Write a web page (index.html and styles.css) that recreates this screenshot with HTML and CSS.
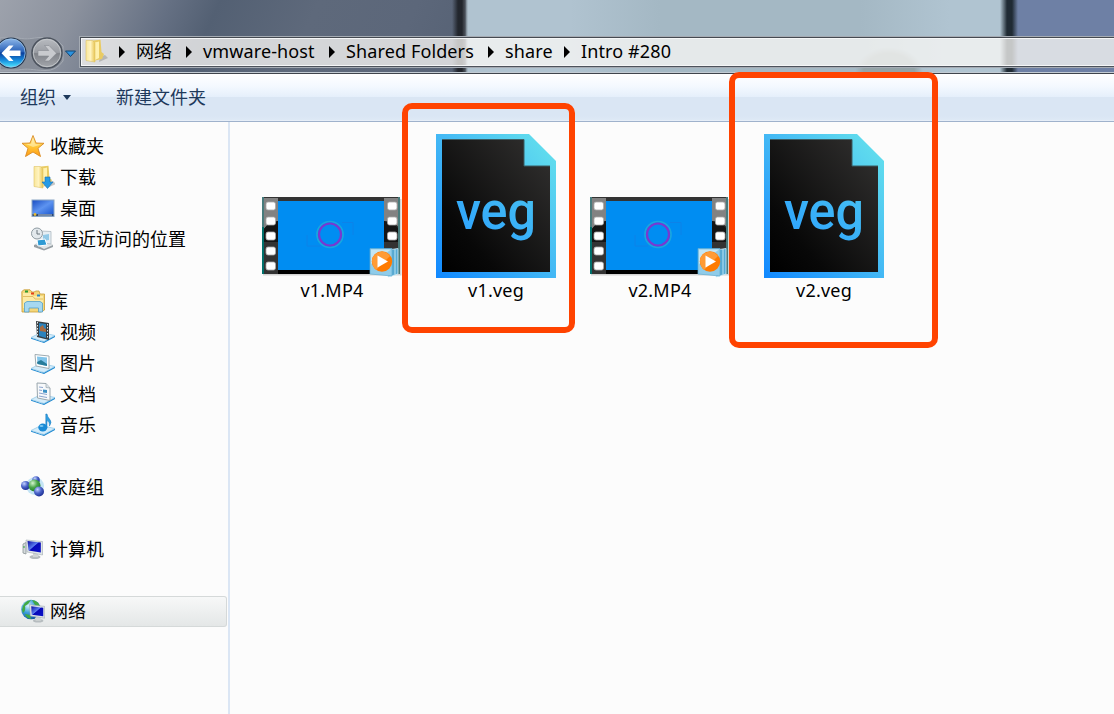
FILE: index.html
```html
<!DOCTYPE html>
<html lang="zh-CN">
<head>
<meta charset="utf-8">
<title>Intro #280</title>
<link rel="stylesheet" href="styles.css">
</head>
<body>
<svg class="defs" width="0" height="0" aria-hidden="true">
  <defs>
    <linearGradient id="vegFrame" x1="0" y1="1" x2="1" y2="0"><stop offset="0" stop-color="#1088ff"/><stop offset=".5" stop-color="#43b8f5"/><stop offset="1" stop-color="#66e4ec"/></linearGradient>
    <linearGradient id="vegInk" x1="0" y1="1" x2="1" y2="0"><stop offset="0" stop-color="#2ba0ff"/><stop offset="1" stop-color="#4ac4f0"/></linearGradient>
    <linearGradient id="vegBody" x1="0" y1="1" x2="1" y2="0"><stop offset="0" stop-color="#000"/><stop offset=".25" stop-color="#080808"/><stop offset="1" stop-color="#333231"/></linearGradient>
    <linearGradient id="blueBtn" x1="0" y1="0" x2="0" y2="1"><stop offset="0" stop-color="#8ab4e8"/><stop offset=".45" stop-color="#2a62b8"/><stop offset=".5" stop-color="#0b3f9c"/><stop offset=".75" stop-color="#168adc"/><stop offset="1" stop-color="#4fe6ff"/></linearGradient>
    <linearGradient id="greyBtn" x1="0" y1="0" x2="0" y2="1"><stop offset="0" stop-color="#b9bcc1"/><stop offset=".48" stop-color="#9a9da3"/><stop offset=".52" stop-color="#808389"/><stop offset="1" stop-color="#a5a8ad"/></linearGradient>
    <linearGradient id="yellow" x1="0" y1="0" x2="1" y2="0"><stop offset="0" stop-color="#f9e79b"/><stop offset=".5" stop-color="#fff3bf"/><stop offset="1" stop-color="#e8c552"/></linearGradient>
    <linearGradient id="star" x1="0" y1="0" x2="0" y2="1"><stop offset="0" stop-color="#ffe9a0"/><stop offset=".5" stop-color="#ffc93a"/><stop offset="1" stop-color="#ff9a14"/></linearGradient>
    <linearGradient id="screen" x1="0" y1="0" x2="1" y2="1"><stop offset="0" stop-color="#1c4fc4"/><stop offset=".5" stop-color="#5d93f0"/><stop offset="1" stop-color="#1e5ad0"/></linearGradient>
    <linearGradient id="monitor" x1="0" y1="0" x2="1" y2="1"><stop offset="0" stop-color="#0a0aa0"/><stop offset=".45" stop-color="#5a7cf0"/><stop offset=".5" stop-color="#0808b8"/><stop offset="1" stop-color="#0a12c8"/></linearGradient>
    <radialGradient id="ballBlue" cx=".35" cy=".3" r=".75"><stop offset="0" stop-color="#c3d2ff"/><stop offset=".5" stop-color="#4a63c8"/><stop offset="1" stop-color="#1b2c90"/></radialGradient>
    <radialGradient id="ballGreen" cx=".35" cy=".3" r=".75"><stop offset="0" stop-color="#d5f5cf"/><stop offset=".5" stop-color="#4aa64a"/><stop offset="1" stop-color="#187a22"/></radialGradient>
    <radialGradient id="globe" cx=".35" cy=".3" r=".8"><stop offset="0" stop-color="#d7f2ff"/><stop offset=".45" stop-color="#3e9fdc"/><stop offset="1" stop-color="#0b4a94"/></radialGradient>

    <symbol id="tray" viewBox="0 0 24 24">
      <path d="M0 17.500 11 21.500 24 15.500V17L13 23 0 18.700z" fill="#1c87d0"/>
      <path d="M0 17.500 10 12.500 24 15.500 13 21.500z" fill="#d4ecfa" stroke="#8cc5e6" stroke-width=".7"/>
    </symbol>

    <symbol id="veg" viewBox="0 0 120 144">
      <path d="M0 0H93L120 27V144H0z" fill="url(#vegFrame)"/>
      <path d="M6 5.500H88V32H114V138H6z" fill="url(#vegBody)"/>
      <path d="M6 5.500H88V32H114" fill="none" stroke="#3b5c63" stroke-width="1"/>
    </symbol>

    <symbol id="video" viewBox="0 0 140 84">
      <rect x="1" y="2" width="138.500" height="76.500" fill="#d4d4d4"/>
      <rect width="138" height="77" fill="#333"/>
      <rect x="16" y="4" width="106" height="73" fill="#000"/>
      <path d="M1 1H16V24Q5 27 1 33zM122 1h15v29q-5-5-15-6z" fill="#828282"/>
      <path d="M1 33Q6 25 16 24V45H1zM122 24q12 2 15 9v12h-15z" fill="#151515"/>
      <path d="M0 0H2V30L0 34zM136 0h2v77h-2z" fill="#477b7c"/>
      <path d="M0 30H2V77H0z" fill="#00706b"/>
      <g fill="#fff" stroke="#aaa" stroke-width=".8">
        <rect x="4" y="5" width="9.500" height="8" rx="2"/><rect x="4" y="20" width="9.500" height="8" rx="2"/><rect x="4" y="35" width="9.500" height="8" rx="2"/><rect x="4" y="50" width="9.500" height="8" rx="2"/><rect x="4" y="65" width="9.500" height="8" rx="2"/>
        <rect x="125.500" y="5" width="9.500" height="8" rx="2"/><rect x="125.500" y="20" width="9.500" height="8" rx="2"/><rect x="125.500" y="35" width="9.500" height="8" rx="2"/>
      </g>
      <rect x="16" y="4" width="106" height="69" fill="#008df2"/>
      <path d="M80 25.500H91V38M45 38V49H58" fill="none" stroke="#0d82e8" stroke-width="1"/>
      <circle cx="68" cy="37.500" r="13" fill="none" stroke="#1aa6df" stroke-width="1.700"/>
      <circle cx="68" cy="37.500" r="11" fill="none" stroke="#7a38d0" stroke-width="2.200"/>
      <path d="M126 53 136 51.500V77L126 80z" fill="#56a9d2" stroke="#d3effa" stroke-width=".8"/>
      <path d="M129 53V78.500M133 52V77.500" stroke="#bce5f5"/>
      <path d="M108 51.500H130V79L108 77z" fill="#90cce9" stroke="#63aed3" stroke-width=".7"/>
      <path d="M109 52.500H129L109 67z" fill="#c3e6f5"/>
      <circle cx="120" cy="64.500" r="10.200" fill="#ff7b00"/><path d="M110 63a10 10 0 0 1 18-4L114 73q-4-4-4-10z" fill="#ff9b35"/>
      <path d="M115.500 58.500 126 64.500 115.500 70.500z" fill="#fff"/>
    </symbol>

    <symbol id="folder" viewBox="0 0 24 24">
      <path d="M15 18 20 16 23 19 14 23z" fill="#8a8a86" opacity=".45"/>
      <path d="M8 1.500 15.500 .8 16.500 13 19 15 17 20 8 22z" fill="#e9cb63"/>
      <path d="M8 4 14 2.500V19L8 22z" fill="#fff1ad"/>
      <path d="M1 1.500H7.500L10 4V23L1 21.500z" fill="url(#yellow)" stroke="#dfc266" stroke-width=".6"/>
    </symbol>

    <symbol id="monitorPc" viewBox="0 0 24 24">
      <path d="M2 7 5 5.500V17L2 16z" fill="#d5dadc" stroke="#8a9497" stroke-width=".8"/>
      <path d="M3 9v2" stroke="#2fa33b"/>
      <ellipse cx="14" cy="20" rx="5.500" ry="2" fill="#b6bcbf"/>
      <path d="M12 16H17V20H12z" fill="#d0d4d5"/>
      <path d="M5 3 21.500 4.500V18L6 15z" fill="#dfe5e7" stroke="#a0abb0" stroke-width=".6"/>
      <path d="M6.500 4 19.800 5.500V15.500L7.500 13.500z" fill="url(#monitor)"/>
    </symbol>
  </defs>
</svg>

<main class="window">
  <header class="glass">
    <svg class="nav" viewBox="0 0 80 36" width="80" height="36">
      <path d="M0 2H18C29 4 31 2 40 1.500Q56 1 63 10V25Q56 35 45 34.500C31 34 29 32 18 34H0z" fill="#878d98" stroke="#a4aab3"/>
      <circle cx="11" cy="17" r="15.500" fill="#263851"/><circle cx="11" cy="17" r="14.200" fill="url(#blueBtn)" stroke="#9dc7ea" stroke-width=".8"/>
      <path d="M1.500 17.200 9 9.500h4.500L9.200 14.500H20.500v5.500H9.200L13.500 25H9z" fill="#fff"/>
      <circle cx="47" cy="17" r="15" fill="url(#greyBtn)" stroke="#4c535e" stroke-width="1.500"/><circle cx="47" cy="17" r="13.700" fill="none" stroke="#c4c7cb" stroke-width=".9"/>
      <path d="M56.500 17.200 49 9.500h-4.500l4.300 5H38v5.500H48.800L44.500 25h4.500z" fill="#c8cace" stroke="#888c92" stroke-width=".6"/>
      <path d="M65.500 15H75.500L70.500 20.500z" fill="#2b93e0" stroke="#17446f"/>
    </svg>
    <nav class="address">
      <svg class="folder" width="24" height="24"><use href="#folder"/></svg>
      <svg class="arrow" viewBox="0 0 6 12"><path d="M0 0 6 6 0 12z"/></svg>
      <span class="crumb network">网络<svg class="arrow" viewBox="0 0 6 12"><path d="M0 0 6 6 0 12z"/></svg></span>
      <span class="crumb host">vmware-host<svg class="arrow" viewBox="0 0 6 12"><path d="M0 0 6 6 0 12z"/></svg></span>
      <span class="crumb shared">Shared Folders<svg class="arrow" viewBox="0 0 6 12"><path d="M0 0 6 6 0 12z"/></svg></span>
      <span class="crumb share">share<svg class="arrow" viewBox="0 0 6 12"><path d="M0 0 6 6 0 12z"/></svg></span>
      <span class="crumb intro">Intro #280</span>
    </nav>
  </header>

  <div class="toolbar">
    <span>组织</span><svg class="drop" viewBox="0 0 8 5" width="8" height="5"><path d="M0 0H8L4 5z" fill="#1e395b"/></svg>
    <span>新建文件夹</span>
  </div>

  <div class="body">
    <aside class="sidebar">
      <div class="row"><svg viewBox="0 0 24 24"><path d="M12 1.500 15 9 23 9.300 17 14.300 19.500 22.500 12 18 4.500 22.500 7 14.300 1 9.300 9 9z" fill="url(#star)" stroke="#d98a21" stroke-width=".9" stroke-linejoin="round"/><path d="M12 3.500 14 10 20 10.500 12 13 5 10 10 10z" fill="#fff6c8" opacity=".55"/></svg>收藏夹</div>
      <div class="row child"><svg viewBox="0 0 24 24"><use href="#folder" x="2" y="0" width="24" height="24"/><path d="M14 12h5v5h3l-5.500 6.500L11 17h3z" fill="#259be6" stroke="#1671b5" stroke-width=".6"/></svg>下载</div>
      <div class="row child"><svg viewBox="0 0 24 24"><path d="M.5 3.500h23v17.500H.5z" fill="#8ba6c4"/><path d="M1.500 4.500h21V18h-21z" fill="url(#screen)"/><path d="M1.500 18h21v2h-21z" fill="#2d4974"/><path d="M7 19h14" stroke="#dce9f5" stroke-width=".8"/><circle cx="4" cy="18.500" r="1.400" fill="#e5b935"/></svg>桌面</div>
      <div class="row child"><svg viewBox="0 0 24 24"><path d="M3 18 12 14 22 18V20L13 23.500 3 20z" fill="#969ea3"/><path d="M4 17 12 13 22 18 13 22z" fill="#e2e6e8"/><path d="M9 4 20 4.500V17L9 16z" fill="#e6eef3" stroke="#adb9c0" stroke-width=".8"/><path d="M12 8 18 7V13L12 14z" fill="#91c9e7"/><path d="M6 13 14 12 16 18 7 19z" fill="#2f9bd4" stroke="#fff"/><circle cx="6" cy="6.500" r="5.500" fill="#e3e9ed" stroke="#8f9ba2"/><path d="M6 3V7H9" fill="none" stroke="#69757c"/></svg>最近访问的位置</div>
      <div class="row gap"><svg viewBox="0 0 24 24"><path d="M.8 2.500 3 .8H9L11 3H13L15 2H18L19 5H23.500V21L20 23H1z" fill="#f4d77b" stroke="#c99c36" stroke-width=".8"/><path d="M2 4H10L12 7H22V19H2z" fill="#fdeba6"/><path d="M2 7.500H12L14 10H22" fill="none" stroke="#d9b254" stroke-width=".8"/><path d="M4 2.500h3" stroke="#2a9a34" stroke-width="2"/><path d="M10 4.500h3" stroke="#e5401c" stroke-width="2"/><path d="M16 6.500h3" stroke="#2487ca" stroke-width="2"/><path d="M3.500 14 6 12.500H19L21.500 14V23H17.500V19H8V23H3.500z" fill="#a6d8f0" stroke="#539fc8" stroke-width=".8"/></svg>库</div>
      <div class="row child"><svg viewBox="0 0 24 24"><use href="#tray" width="24" height="24"/><path d="M5 1 18 3V20L6 17z" fill="#383e42"/><path d="M8 3 15 4V18L8 16z" fill="#2c83bd"/><path d="M9 7 12 5 13 8 15 9V12L9 11z" fill="#a96c42"/><path d="M6.500 2V17M16.500 4V19" stroke="#e2e8ea" stroke-dasharray="1.500 1.500"/></svg>视频</div>
      <div class="row child"><svg viewBox="0 0 24 24"><use href="#tray" width="24" height="24"/><path d="M4 3.500 18 5V17.500L5 15z" fill="#fff" stroke="#9fabb1"/><path d="M6 5.500 16 6.500V15L6.500 13z" fill="#81c4ea"/><path d="M6 11 10 9 16 13V15L6.500 13z" fill="#287d9b"/></svg>图片</div>
      <div class="row child"><svg viewBox="0 0 24 24"><use href="#tray" width="24" height="24"/><path d="M6 1 15 1.500 19 6V18.500L6.500 16z" fill="#f7f9fb" stroke="#9aa6ad"/><path d="M15 1.500V5.500L19 6" fill="#dce4ea" stroke="#9aa6ad" stroke-width=".7"/><path d="M8 5 12 5.500M8 8 11 8.500M8 11 16 12.500M8 14 16 15.500" stroke="#8da5cf"/><path d="M12 7.500 16 8V11L12 10.500z" fill="#3d91c5"/></svg>文档</div>
      <div class="row child"><svg viewBox="0 0 24 24"><use href="#tray" width="24" height="24"/><path d="M14.800 1H16Q16.500 4 18.500 6 21.500 9 18.500 13 19 9 16 7.500V15H14.800z" fill="#2f9fe0" stroke="#1877bd" stroke-width=".5"/><ellipse cx="11.800" cy="14.500" rx="4.500" ry="4" fill="#188ad6"/><ellipse cx="10.500" cy="13" rx="2" ry="1" fill="#7dc8f0"/></svg>音乐</div>
      <div class="row gap"><svg viewBox="0 0 24 24"><circle cx="14" cy="11" r="9" fill="#c4e4f5"/><circle cx="15" cy="5" r="3.800" fill="url(#ballBlue)"/><circle cx="4.500" cy="10.500" r="4.500" fill="url(#ballBlue)"/><circle cx="13.500" cy="10.500" r="6" fill="url(#ballGreen)"/><circle cx="18" cy="16.500" r="5" fill="url(#ballBlue)"/></svg>家庭组</div>
      <div class="row gap"><svg viewBox="0 0 24 24"><use href="#monitorPc" width="24" height="24"/></svg>计算机</div>
      <div class="row gap selected"><svg viewBox="0 0 24 24"><circle cx="10" cy="10.500" r="9.800" fill="url(#globe)"/><path d="M1 11Q2 2 10 1 8 5 4 7 5 12 2 14zM11 1Q18 2 19 8L14 6zM4 15 9 16 10 20Q5 19 4 15z" fill="#41a944"/><g transform="translate(5 3.500) scale(.87)"><ellipse cx="14" cy="21" rx="6" ry="2" fill="#b6bcbf"/><path d="M11 16h6v5h-6z" fill="#d0d4d5"/><path d="M4 2.500 21.500 4.500V18L5 15.500z" fill="#dfe5e7" stroke="#a0abb0" stroke-width=".7"/><path d="M6 4.200 19.800 6V15.800L6.500 14z" fill="url(#monitor)"/></g></svg>网络</div>
    </aside>

    <section class="files">
      <div class="file"><div class="thumb"><svg class="clip" width="140" height="84"><use href="#video"/></svg></div><span class="name">v1.MP4</span></div>
      <div class="file"><div class="thumb"><svg width="120" height="144"><use href="#veg"/><text class="vegtext" x="20" y="94.500" textLength="80" lengthAdjust="spacingAndGlyphs" fill="url(#vegInk)">veg</text></svg></div><span class="name">v1.veg</span></div>
      <div class="file"><div class="thumb"><svg class="clip" width="140" height="84"><use href="#video"/></svg></div><span class="name">v2.MP4</span></div>
      <div class="file"><div class="thumb"><svg width="120" height="144"><use href="#veg"/><text class="vegtext" x="20" y="94.500" textLength="80" lengthAdjust="spacingAndGlyphs" fill="url(#vegInk)">veg</text></svg></div><span class="name">v2.veg</span></div>
    </section>
  </div>
  <div class="mark first"></div>
  <div class="mark second"></div>
</main>
</body>
</html>
```
FILE: styles.css
```css
* { box-sizing: border-box; }
body {
  margin: 0;
  background: #fcfcfc;
  color: #000;
  font: 18px/31px "Noto Sans", "Noto Sans CJK SC", sans-serif;
}
.defs { position: absolute; }
svg { display: block; flex: none; }
.window {
  position: relative;
  width: 1114px;
  height: 714px;
  overflow: hidden;
  display: flex;
  flex-direction: column;
}
.glass {
  height: 74px;
  padding-top: 36px;
  display: flex;
  align-items: flex-start;
  border-bottom: 1px solid #3f444c;
  box-shadow: inset 0 -1px #c3cbd3;
  background:
    radial-gradient(ellipse 34px 26px at 889px 73px, #94a3a7 0 75%, transparent 100%),
    linear-gradient(90deg, transparent 452px, #22262d 458px 462px, #3f444b 464px, transparent 468px),
    linear-gradient(90deg, transparent 1000px, #202b34 1007px 1012px, transparent 1018px),
    linear-gradient(90deg, transparent 465px, #b0c3d0 466px 570px, #a4b8c4 660px 860px, #b0c4d1 950px 1007px, #6e80a5 1010px),
    linear-gradient(115deg, #9da2ac 0, #8c929e 70px, #657083 155px, #536073 200px, #5e697b 290px, #5c677a 380px, #515d70 500px);
}
.address {
  flex: 1;
  height: 30px;
  margin: 1px -2px 0 0;
  padding: 0 0 2px 4px;
  display: flex;
  align-items: center;
  border: 1px solid #4d535c;
  border-top-color: #454a51;
  outline: 1px solid #a5abb3;
  box-shadow: inset 0 0 0 1px #f5f6f7;
  background: rgba(250, 248, 246, .76);
  white-space: nowrap;
  letter-spacing: .12px;
}
.folder { margin-right: 10px; }
.arrow { width: 6px; height: 12px; margin: 2px 11px 0 0; }
.crumb { display: flex; align-items: center; justify-content: space-between; }
.network { width: 67px; }
.host { width: 143px; }
.shared { width: 159px; }
.share { width: 76px; }
.toolbar {
  height: 48px;
  padding-left: 20px;
  display: flex;
  align-items: center;
  color: #1e395b;
  border-bottom: 1px solid #9fb2cc;
  box-shadow: inset 0 -1px #e6eef8;
  background: linear-gradient(#fff, #f4f9ff 12px, #e5effb 23px, #dae6f4 23px, #dae6f4 42px, #dfeaf6);
}
.drop { margin: 0 45px 0 7px; }
.body { flex: 1; display: flex; }
.sidebar { width: 230px; padding-top: 9px; border-right: 2px solid #dbe6f4; }
.row { height: 31px; width: 227px; padding-left: 21px; display: flex; align-items: center; }
.row svg { width: 24px; height: 24px; margin: 0 5px 1px 0; }
.row.child { padding-left: 31px; }
.row.gap { margin-top: 31px; }
.row.selected {
  border: 1px solid #d5d9d9;
  border-left: 0;
  border-radius: 0 3px 3px 0;
  background: linear-gradient(#f7f8f8, #e4e7e7);
}
.files { display: flex; padding: 12px 0 0 20px; }
.file { width: 164px; display: flex; flex-direction: column; align-items: center; }
.thumb { height: 144px; display: flex; align-items: flex-end; }
.clip { margin-bottom: -3px; }
.name { height: 24px; line-height: 24px; letter-spacing: .2px; }
.vegtext { font: 500 51px "Roboto", sans-serif; }
.mark { position: absolute; border: 6px solid #ff4300; border-radius: 10px; }
.first { left: 402px; top: 103px; width: 173px; height: 230px; }
.second { left: 729px; top: 72px; width: 209px; height: 276px; }
```
